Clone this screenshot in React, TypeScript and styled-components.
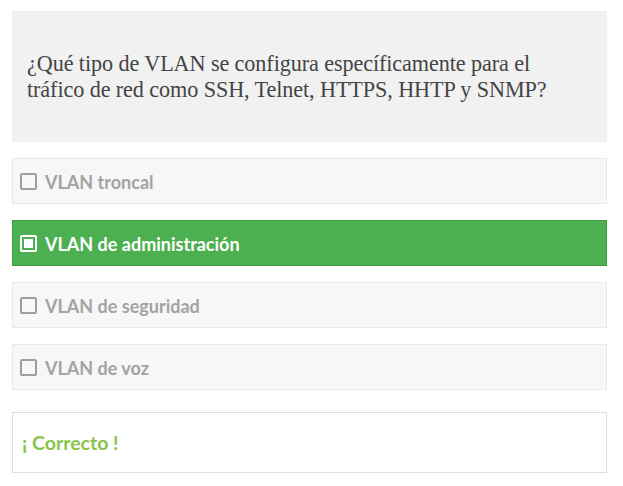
import React from "react";
import styled, { createGlobalStyle } from "styled-components";

const Global = createGlobalStyle`
  html, body { margin: 0; padding: 0; background: #ffffff; }
  * { box-sizing: border-box; }
`;

const Page = styled.div`
  padding: 11px 16px 12px 12px;
  display: flex;
  flex-direction: column;
  gap: 16px;
`;

const QuestionBox = styled.div`
  background: #f1f1f1;
  height: 131px;
  padding: 0 15px;
  display: flex;
  align-items: center;
`;

const QuestionText = styled.p`
  margin: 0;
  font-family: "Liberation Serif", "DejaVu Serif", serif;
  font-size: 22.2px;
  line-height: 26px;
  color: #444444;
  letter-spacing: -0.1px;
`;

const Options = styled.div`
  display: flex;
  flex-direction: column;
  gap: 16px;
`;

const Option = styled.div<{ $selected?: boolean }>`
  height: 46px;
  display: flex;
  align-items: center;
  gap: 8px;
  padding: 1px 7px 0;
  background: ${(p) => (p.$selected ? "#4caf50" : "#f7f7f7")};
  border: 1px solid ${(p) => (p.$selected ? "#3f9a43" : "#e8e8e8")};
  color: ${(p) => (p.$selected ? "#ffffff" : "#a3a3a3")};
  font-family: Lato, "Liberation Sans", sans-serif;
  font-weight: 700;
  font-size: 18px;
`;

const Box = styled.span<{ $selected?: boolean }>`
  width: 17px;
  height: 17px;
  border: 2px solid ${(p) => (p.$selected ? "#ffffff" : "#9e9e9e")};
  border-radius: 2px;
  display: flex;
  align-items: center;
  justify-content: center;
  flex: none;
`;

const Dot = styled.span`
  width: 9px;
  height: 9px;
  background: #ffffff;
  border-radius: 1px;
`;

const Result = styled.div`
  margin-top: 6px;
  height: 61px;
  border: 1px solid #dddddd;
  background: #ffffff;
  display: flex;
  align-items: center;
  padding: 0 9px;
  font-family: Lato, "Liberation Sans", sans-serif;
  font-weight: 700;
  font-size: 19.5px;
  color: #8bc34a;
`;

const options = [
  { label: "VLAN troncal", selected: false },
  { label: "VLAN de administración", selected: true },
  { label: "VLAN de seguridad", selected: false },
  { label: "VLAN de voz", selected: false },
];

export default function App() {
  return (
    <>
      <Global />
      <Page>
        <QuestionBox>
          <QuestionText>
            ¿Qué tipo de VLAN se configura específicamente para el
            <br />
            tráfico de red como SSH, Telnet, HTTPS, HHTP y SNMP?
          </QuestionText>
        </QuestionBox>
        <Options>
          {options.map((o) => (
            <Option key={o.label} $selected={o.selected}>
              <Box $selected={o.selected}>{o.selected && <Dot />}</Box>
              {o.label}
            </Option>
          ))}
        </Options>
        <Result>¡ Correcto !</Result>
      </Page>
    </>
  );
}
